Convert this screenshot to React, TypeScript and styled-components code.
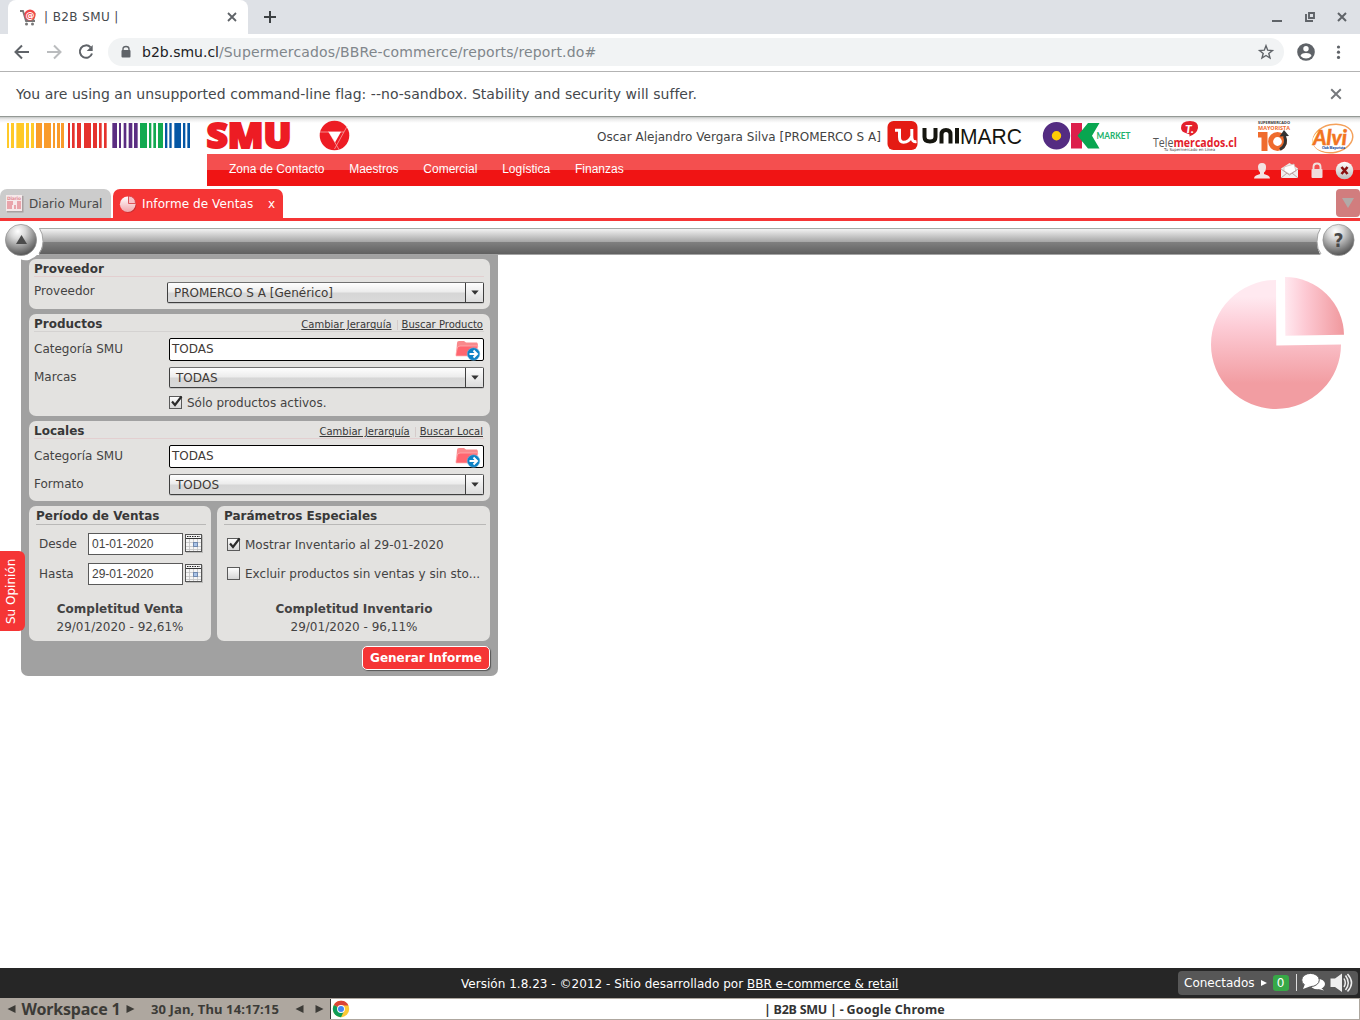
import React from "react";
import styled, { createGlobalStyle } from "styled-components";

const Global = createGlobalStyle`
  *{box-sizing:border-box}
  body{margin:0;background:#fff;overflow:hidden;font-family:"DejaVu Sans",sans-serif}
  svg{display:block;flex:none;overflow:visible}
`;

const Screen = styled.div`
  width: 1360px;
  height: 1020px;
  display: flex;
  flex-direction: column;
  font-size: 12px;
  color: #434343;
`;

const Label = styled.span<{ $size?: number; $ls?: number; $color?: string; $bold?: boolean; $family?: string; $u?: boolean }>`
  white-space: pre;
  font-size: ${(p) => p.$size ?? 12}px;
  letter-spacing: ${(p) => p.$ls ?? 0}px;
  color: ${(p) => p.$color ?? "inherit"};
  font-weight: ${(p) => (p.$bold ? 700 : 400)};
  font-family: ${(p) => p.$family ?? "inherit"};
  text-decoration: ${(p) => (p.$u ? "underline" : "none")};
`;

/* Browser chrome */
const TabStrip = styled.div`
  height: 34px;
  flex: none;
  background: #dee1e6;
  display: flex;
  padding-left: 8px;
`;
const BrowserTab = styled.div`
  width: 240px;
  background: #fff;
  border-radius: 8px 8px 0 0;
  display: flex;
  align-items: center;
  padding: 0 11px 0 12px;
`;
const TabTitle = styled(Label)`
  flex: 1;
  padding-left: 7px;
`;
const NewTab = styled.div`
  padding: 11px 0 0 16px;
  flex: 1;
`;
const WindowButtons = styled.div`
  display: flex;
  align-items: center;
  gap: 22.5px;
  padding-right: 13px;
`;
const AddressRow = styled.div`
  height: 38px;
  flex: none;
  display: flex;
  align-items: center;
  padding: 0 15px 1px 14px;
  border-bottom: 1px solid #b3b3b3;
`;
const NavIcons = styled.div`
  display: flex;
  gap: 16px;
  width: 94px;
`;
const Omnibox = styled.div`
  width: 1176px;
  height: 28px;
  border-radius: 14px;
  background: #f1f3f4;
  display: flex;
  align-items: center;
  padding: 0 10px 0 12px;
`;
const Url = styled.div`
  flex: 1;
  padding-left: 10px;
  white-space: pre;
`;
const ProfileIcons = styled.div`
  display: flex;
  flex: 1;
  align-items: center;
  justify-content: space-between;
  padding: 0 4px 0 13px;
`;
const InfoBar = styled.div`
  height: 44px;
  flex: none;
  display: flex;
  align-items: center;
  justify-content: space-between;
  padding: 0 18px 0 16px;
`;

/* Site header */
const SiteHeader = styled.header`
  height: 38px;
  flex: none;
  display: flex;
  border-top: 1px solid #949995;
  background: linear-gradient(#c4c6c5, #e9e9e9 2px, #fff 6px);
`;
const UserName = styled.div`
  width: 534px;
  padding: 13px 4px 0 0;
  text-align: right;
`;
const Menu = styled.nav`
  margin-left: 207px;
  height: 32px;
  flex: none;
  display: flex;
  background: linear-gradient(#f44f4f 50%, #f01414 50%);
  padding: 0 6px 0 22px;
`;
const MenuItems = styled.div`
  flex: 1;
  display: flex;
  gap: 24.8px;
  line-height: 30px;
  color: #fff;
  font-family: "Liberation Sans", Arial, sans-serif;
`;
const MenuIcons = styled.div`
  display: flex;
  align-items: center;
`;
const PageTabs = styled.div`
  height: 35px;
  flex: none;
  display: flex;
  gap: 2px;
  padding-top: 3px;
  border-bottom: 3px solid #f53535;
`;
const PageTab = styled.div<{ $active?: boolean }>`
  width: ${(p) => (p.$active ? 170 : 111)}px;
  border-radius: 7px 7px 0 0;
  background: ${(p) => (p.$active ? "#f53535" : "#cccccc")};
  color: ${(p) => (p.$active ? "#fff" : "#484848")};
  display: flex;
  align-items: center;
  justify-content: space-between;
  padding: 0 8px 0 6px;
`;
const TabCaption = styled.div<{ $pad: number }>`
  flex: 1;
  padding-left: ${(p) => p.$pad}px;
`;
const TabMenu = styled.div`
  width: 24px;
  height: 28px;
  margin-left: auto;
  border-radius: 4px;
  background: #d17d7e;
  display: flex;
  align-items: center;
  justify-content: center;
`;
const ToolStrip = styled.div`
  height: 34px;
  flex: none;
  padding-top: 7px;
  position: relative;
  z-index: 2;
`;
const ToolBar = styled.div`
  height: 27px;
  margin: 0 39px;
  border-top: 1px solid #a6aaa7;
  border-bottom: 1px solid #a4a4a4;
  background: linear-gradient(#f2f2f2, #a5a5a5 13px, #808080 13px, #606060);
`;
const Knob = styled.div<{ $right?: boolean }>`
  position: absolute;
  top: 0px;
  ${(p) => (p.$right ? "right: -1px;" : "left: -1px;")}
`;

/* Report form */
const Content = styled.main`
  flex: 1;
  display: flex;
  justify-content: space-between;
  align-items: flex-start;
  position: relative;
`;
const Panel = styled.section`
  margin-left: 21px;
  width: 477px;
  height: 421px;
  background: #a1a1a1;
  border-radius: 0 0 7px 7px;
  padding: 4px 8px 0;
  display: flex;
  flex-direction: column;
  gap: 5px;
`;
const Card = styled.div<{ $h: number }>`
  height: ${(p) => p.$h}px;
  border-radius: 7px;
  background: #e3e2e0;
  padding: 0 6px 0 5px;
  display: flex;
  flex-direction: column;
`;
const CardTitle = styled.div<{ $tint?: boolean }>`
  height: 18px;
  flex: none;
  padding-top: 2px;
  border-bottom: 1px solid ${(p) => (p.$tint ? "#e3cfd0" : "#d4d2d1")};
  display: flex;
  align-items: center;
  justify-content: space-between;
  color: #383838;
`;
const Links = styled.div`
  display: flex;
  align-items: center;
  padding: 2px 1px 0 0;
`;
const LinkDivider = styled.i`
  width: 1px;
  height: 10px;
  margin: 0 4px 0 5px;
  background: #d5cbca;
`;
const Field = styled.div<{ $mt: number; $label?: number; $drop?: number }>`
  margin-top: ${(p) => p.$mt}px;
  display: grid;
  grid-template-columns: ${(p) => p.$label ?? 135}px 1fr;
  flex: none;
  line-height: 18px;

  & > ${Label} {
    padding-top: ${(p) => p.$drop ?? 0}px;
  }
`;
const SelectBox = styled.div`
  height: 21px;
  border: 1px solid #3f3f3f;
  border-top-color: #707070;
  border-radius: 2px;
  background: linear-gradient(#fefefe, #ececec 48%, #d6d6d6 52%, #dadada);
  box-shadow: 0 1px 0 #c4c4c4;
  display: flex;
  padding-left: 6px;
  line-height: 20px;
  color: #3f3a36;
`;
const SelectArrow = styled.div`
  width: 18px;
  margin-left: auto;
  border-left: 1px solid #3f3f3f;
  background: linear-gradient(#fdfdfd, #dcdcdc);
  display: flex;
  align-items: center;
  justify-content: center;
`;
const Picker = styled.div`
  height: 23px;
  border: 1px solid #000;
  border-radius: 2px;
  background: #fff;
  display: flex;
  justify-content: space-between;
  line-height: 20px;
  padding: 0 2px 0 2px;
  color: #3f3a36;
`;
const CheckRow = styled.div<{ $mt?: number; $ml?: number }>`
  display: flex;
  height: 14px;
  flex: none;
  align-items: center;
  gap: 4px;
  margin-top: ${(p) => p.$mt ?? 0}px;
  margin-left: ${(p) => p.$ml ?? 0}px;

  & > ${Label} {
    padding-top: 2px;
  }
`;
const SplitRow = styled.div`
  display: grid;
  grid-template-columns: 182px 273px;
  gap: 6px;
`;
const HalfCard = styled(Card)<{ $right: number }>`
  padding: 0 ${(p) => p.$right}px 0 7px;
`;
const HalfTitle = styled.div`
  height: 19px;
  flex: none;
  border-bottom: 1px solid #b9b8b7;
  line-height: 20px;
  color: #383838;
`;
const DateRow = styled.div<{ $mt: number }>`
  margin-top: ${(p) => p.$mt}px;
  height: 22px;
  flex: none;
  display: flex;
  align-items: center;
  padding-left: 3px;
`;
const DateLabel = styled.div`
  width: 49px;
`;
const DateBox = styled.div`
  width: 95px;
  height: 22px;
  margin-right: 2px;
  border: 1px solid #5a5a5a;
  background: #fff;
  padding-left: 3px;
  line-height: 20px;
  font-family: "Liberation Sans", Arial, sans-serif;
`;
const Complete = styled.div<{ $mt: number }>`
  margin-top: ${(p) => p.$mt}px;
  padding-right: 2px;
  text-align: center;
  line-height: 18px;
  white-space: nowrap;
`;
const Generate = styled.button`
  align-self: flex-end;
  width: 128px;
  height: 24px;
  padding: 0 0 2px;
  border: 1px solid #fff;
  border-radius: 5px;
  background: #f53535;
  box-shadow: 1px 1px 1px #555;
  color: #fff;
  font-family: "DejaVu Sans", sans-serif;
`;
const ChartArt = styled.div`
  padding: 20px 14px 0 0;
`;
const Opinion = styled.div`
  position: absolute;
  left: 0;
  top: 296px;
  width: 25px;
  height: 80px;
  border-radius: 6px 0 0 6px;
  background: #f53535;
  color: #fff;
  writing-mode: vertical-rl;
  transform: rotate(180deg);
  display: flex;
  align-items: center;
  justify-content: center;
  padding-left: 4px;
`;

/* Footer and desktop task bar */
const Footer = styled.footer`
  height: 30px;
  flex: none;
  background: #262626;
  color: #fff;
  display: grid;
  grid-template-columns: 1fr 180px;
  align-items: center;
  padding-right: 2px;
`;
const Credits = styled.div`
  padding: 2px 0 0 461px;
`;
const Online = styled.div`
  height: 24px;
  border-radius: 4px;
  background: #575757;
  display: flex;
  align-items: center;
  padding-left: 6px;
`;
const Count = styled.div`
  width: 16px;
  height: 16px;
  margin: 0 6px 0 6px;
  border-radius: 3px;
  background: #37a847;
  text-align: center;
  line-height: 16px;
`;
const TaskBar = styled.div`
  height: 22px;
  flex: none;
  background: #aea79f;
  color: #3c3b37;
  display: flex;
  align-items: center;
  font-family: "Noto Sans", sans-serif;
  padding-left: 7px;
`;
const TaskText = styled.div<{ $w: number; $drop?: number }>`
  width: ${(p) => p.$w}px;
  padding-top: ${(p) => p.$drop ?? 0}px;
  text-align: center;
  line-height: 20px;
  white-space: nowrap;
`;
const TaskWindow = styled.div`
  width: 1029px;
  height: 20px;
  margin-left: 6px;
  border-left: 1px solid #3c3b37;
  background: #fff;
  color: #333;
  display: flex;
  align-items: center;
  padding-left: 1px;
`;
const TaskTitle = styled.div`
  flex: 1;
  text-align: center;
`;

const Cross = ({ s = 10, c = "#5f6368", w = 1.8 }: { s?: number; c?: string; w?: number }) => (
  <svg width={s} height={s} viewBox="0 0 10 10">
    <path d="M1 1L9 9M9 1L1 9" stroke={c} strokeWidth={w} />
  </svg>
);

const Favicon = () => (
  <svg width="17" height="17" viewBox="0 0 17 17">
    <path d="M0 2H3L6 12H15" fill="none" stroke="#777" strokeWidth="1.800" />
    <path d="M4 4H15.500L14 12H6Z" fill="#777" />
    <circle cx="10" cy="6" r="5.600" fill="#f04848" />
    <text x="10" y="9" fontSize="9" fontWeight="700" textAnchor="middle" fill="#fff" fontFamily="DejaVu Sans">@</text>
    <circle cx="6.500" cy="15" r="1.500" fill="#777" />
    <circle cx="12.500" cy="15" r="1.500" fill="#777" />
  </svg>
);

const yellow = "#ffc928", orange = "#f99b2b", red = "#e5322d", purple = "#5b2d82", green = "#12a950", blue = "#0557a5";
const bars: [number, number, string][] = [
  [21, 6, yellow], [33, 9, yellow], [49, 23, yellow], [78, 9, yellow], [93, 9, yellow],
  [108, 18, orange], [132, 21, orange], [159, 6, orange], [171, 9, orange], [183, 9, orange],
  [204, 6, red], [216, 8, red], [231, 12, red], [252, 21, red], [279, 12, red], [297, 8, red], [312, 8, red],
  [337, 14, purple], [357, 6, purple], [371, 8, purple], [386, 11, purple], [402, 11, purple],
  [420, 21, green], [447, 7, green], [460, 8, green], [474, 15, green],
  [495, 7, blue], [508, 7, blue], [523, 20, blue], [549, 7, blue], [562, 8, blue],
];

const LeftLogos = () => (
  <svg width="351" height="37" viewBox="0 117 351 37">
    {bars.map(([x, w, c]) => (
      <rect key={x} x={x / 3} y="123" width={w / 3} height="25" fill={c} />
    ))}
    <text x="206.500" y="148.300" fontFamily="Open Sans" fontWeight="800" fontSize="35" textLength="85" lengthAdjust="spacingAndGlyphs" fill="#ed1c24" stroke="#ed1c24" strokeWidth="2">SMU</text>
    <circle cx="334.500" cy="135.500" r="14.800" fill="#ed1c24" />
    <path d="M320 132H344M347 126.500L334.500 149M328.500 131.500L339 149.500" stroke="#f8a5a5" strokeWidth=".8" fill="none" />
    <path d="M328.500 131.800H341L335 142.500Z" fill="#fff" />
  </svg>
);

const BrandLogos = () => (
  <svg width="475" height="37" viewBox="885 117 475 37">
    <rect x="887.500" y="121" width="30" height="29" rx="6" fill="#e41b13" />
    <path d="M895 130.300H899.500V137Q899.500 142.300 903.500 142.300Q909 142.300 911.800 136V129M911.800 136Q911.500 142.500 916.500 141.500" fill="none" stroke="#fff" strokeWidth="3" />
    <g fill="none" stroke="#15150f" strokeWidth="4">
      <path d="M924.500 128V137Q924.500 141.500 930 141.500Q935.500 141.500 935.500 137V128" />
      <path d="M941.500 143.500V134.500Q941.500 130 946 130Q950.500 130 950.500 134.500V143.500M957 128V143.500" />
    </g>
    <text x="960" y="143.500" fontFamily="Liberation Sans" fontSize="22" textLength="62" lengthAdjust="spacingAndGlyphs" fill="#15150f">MARC</text>
    <circle cx="1056.500" cy="135.700" r="9.200" fill="#ffcb05" stroke="#542c82" strokeWidth="9" />
    <rect x="1071" y="123" width="11" height="25.500" fill="#dc1f4b" />
    <path d="M1077.500 135.700L1088 123H1099.500L1092 135.700L1099.500 148.500H1088Z" fill="#08a650" />
    <text x="1096.500" y="139" fontFamily="Lato" fontWeight="700" fontSize="8.500" textLength="34" lengthAdjust="spacingAndGlyphs" fill="#20b26b">MARKET</text>
    <path d="M1181 128Q1181 121 1190 121Q1198.500 121 1198 128Q1197 134 1189 136.500Q1191 134 1187 133.500Q1181 132 1181 128Z" fill="#e3202b" />
    <text x="1185" y="132.500" fontFamily="Lato" fontWeight="900" fontStyle="italic" fontSize="12" fill="#fff">T.</text>
    <text x="1153" y="146.500" fontFamily="Open Sans" fontSize="12.500" textLength="84" lengthAdjust="spacingAndGlyphs" fill="#555">
      Tele<tspan fontWeight="700" fill="#e3202b">mercados.cl</tspan>
    </text>
    <text x="1164" y="150.500" fontFamily="DejaVu Sans" fontSize="4" textLength="51" lengthAdjust="spacingAndGlyphs" fill="#444">Tu Supermercado en Línea</text>
    <text x="1258" y="124" fontFamily="Open Sans" fontWeight="700" fontSize="4.200" textLength="32" lengthAdjust="spacingAndGlyphs" fill="#383838">SUPERMERCADO</text>
    <text x="1258" y="129.500" fontFamily="Open Sans" fontWeight="700" fontSize="6" textLength="32" lengthAdjust="spacingAndGlyphs" fill="#ef6b2d">MAYORISTA</text>
    <path d="M1258 132H1267.500V151H1261.500V137.500H1258Z" fill="#ef6b2d" />
    <circle cx="1277.500" cy="141.500" r="6.900" fill="none" stroke="#ef6b2d" strokeWidth="5" />
    <path d="M1280 149.500Q1288 145 1284.500 136" fill="none" stroke="#333" strokeWidth="3" />
    <path d="M1279.500 136.500L1284 130L1289 136Z" fill="#333" />
    <ellipse cx="1333" cy="138.500" rx="20" ry="14" fill="none" stroke="#f4a15b" strokeWidth="1.500" transform="rotate(-12 1333 138.500)" />
    <ellipse cx="1331" cy="138.500" rx="18.500" ry="12.500" fill="#fff" transform="rotate(-12 1333 138.500)" />
    <text x="1313" y="144.500" fontFamily="Lato" fontWeight="900" fontStyle="italic" fontSize="20.500" textLength="34" lengthAdjust="spacingAndGlyphs" fill="#f27521" stroke="#f27521" strokeWidth=".4">Alvi</text>
    <text x="1322" y="149" fontFamily="Open Sans" fontWeight="800" fontSize="3.800" textLength="23" lengthAdjust="spacingAndGlyphs" fill="#2350a0">Club Mayorista</text>
  </svg>
);

const MenuIconSet = () => (
  <svg width="100" height="32" viewBox="1254 154 100 32">
    <defs>
      <linearGradient id="ball" x2="0" y2="1"><stop stopColor="#fff" /><stop offset="1" stopColor="#bcbcbc" /></linearGradient>
    </defs>
    <path d="M1258 167Q1258 163 1262 163Q1266.500 163 1266 168Q1266 171 1264 172.500V174L1268 175.500Q1270 176.500 1270 178.500H1254Q1254 176.500 1256 175.500L1260 174V172.500Q1258 171 1258 167Z" fill="#f3e3e3" />
    <path d="M1281 168.500L1289.500 163L1298 168.500V178H1281Z" fill="#eee" />
    <path d="M1284 167L1294 164L1296 171L1289.500 174L1284 171Z" fill="#fff" stroke="#c9b6b1" strokeWidth=".7" />
    <path d="M1281 169L1289.500 175L1298 169M1281 178L1287 173M1298 178L1292 173" fill="none" stroke="#b99" strokeWidth=".9" />
    <path d="M1313.500 170V167Q1313.500 163.500 1317 163.500Q1320.500 163.500 1320.500 167V170" fill="none" stroke="#eee3df" strokeWidth="1.900" />
    <rect x="1311.500" y="169" width="11" height="9" rx="1" fill="#f0dddd" />
    <circle cx="1344.500" cy="170.500" r="8.800" fill="url(#ball)" />
    <path d="M1341.500 167L1347.500 174M1347.500 167L1341.500 174" stroke="#8b1010" strokeWidth="2.600" />
  </svg>
);

const NewsIcon = () => (
  <svg width="18" height="18" viewBox="0 0 18 18">
    <rect x="1" y="1" width="16.500" height="16.500" fill="#9a8e8e" opacity=".7" />
    <rect width="16" height="16" fill="#f6e9ea" />
    <text x="1" y="4.500" fontSize="4.500" fontWeight="700" textLength="14" fill="#e28e96" fontFamily="DejaVu Sans">Diario</text>
    <path d="M1 6H7V10H6V14H1ZM8 10H10V14H8ZM11 6H15V14H11Z" fill="#e9a4ab" />
  </svg>
);

const MiniPie = () => (
  <svg width="19" height="18" viewBox="0 0 19 18">
    <defs><linearGradient id="mini" x2="0" y2="1"><stop stopColor="#fff" /><stop offset="1" stopColor="#f0a5ab" /></linearGradient></defs>
    <circle cx="9.500" cy="10" r="7.800" fill="#a92b2f" opacity=".6" />
    <circle cx="8.700" cy="9.200" r="7.800" fill="url(#mini)" />
    <path d="M9.500 1Q16.500 1.500 16.500 8.500H9.500Z" fill="#f8c0c7" stroke="#d9474d" strokeWidth=".9" />
  </svg>
);

const KnobArt = ({ right }: { right?: boolean }) => (
  <svg width="46" height="42" viewBox="-1 221 46 42">
    <defs>
      <radialGradient id="knob" cx=".4" cy=".22" r=".82">
        <stop stopColor="#fff" /><stop offset=".3" stopColor="#d8d8d8" /><stop offset=".75" stopColor="#7b7b7b" /><stop offset="1" stopColor="#4b4b4b" />
      </radialGradient>
    </defs>
    <g transform={right ? "matrix(-1 0 0 1 44 0)" : undefined}>
      <path d={right ? "M-1 221H39V228Q43 233 43 241.500Q43 250 39 255.500H-1Z" : "M-1 221H39V228Q43 233 43 241.500Q42 255 29 260Q24 261 20 259L8 254H-1Z"} fill="#fff" />
      <path d="M39.500 228.500Q43 233 43 241.500Q43 249 39 254" fill="none" stroke="#a5a5a5" strokeWidth="1" />
    </g>
    <circle cx={right ? 22.500 : 21} cy="240" r="15.600" fill="url(#knob)" stroke="#909090" strokeWidth=".7" />
    {right ? (
      <text x="22.500" y="246.500" textAnchor="middle" fontFamily="DejaVu Sans" fontWeight="700" fontSize="19" textLength="10" lengthAdjust="spacingAndGlyphs" fill="#484848">?</text>
    ) : (
      <path d="M16 244L21.500 235L27 244Z" fill="#4b4b4b" />
    )}
  </svg>
);

const Select = ({ children }: { children: React.ReactNode }) => (
  <SelectBox>
    {children}
    <SelectArrow><svg width="8" height="5" viewBox="0 0 8 5"><path d="M.3 .5H7.700L4 4.800Z" fill="#333" /></svg></SelectArrow>
  </SelectBox>
);

const Folder = () => (
  <svg width="26" height="21" viewBox="0 0 26 21">
    <path d="M2 4Q2 2 4 2H9L11 3.500H22Q23 4 23 7L21 16H1Z" fill="#f9898c" />
    <path d="M5 7H23L18.500 17H1.500Q.5 17 1 15L2.500 8Z" fill="#ff6670" stroke="#ffb7b7" strokeWidth=".7" />
    <circle cx="18.500" cy="15" r="6.300" fill="#0d82c6" stroke="#85bfe0" strokeWidth=".5" />
    <path d="M14.500 15H21M18.500 11.500L22 15L18.500 18.500" fill="none" stroke="#fff" strokeWidth="2" />
  </svg>
);

const Check = ({ on }: { on?: boolean }) => (
  <svg width="14" height="14" viewBox="0 0 14 14">
    <defs><linearGradient id="cb" x2="0" y2="1"><stop stopColor="#fff" /><stop offset="1" stopColor="#d4d4d4" /></linearGradient></defs>
    <rect x=".5" y="1.500" width="12" height="12" fill="url(#cb)" stroke="#5a5a5a" />
    {on && <path d="M3 6.500L6 10L12.500 1.500" fill="none" stroke="#2b2b2b" strokeWidth="2.200" />}
  </svg>
);

const Calendar = () => (
  <svg width="18" height="20" viewBox="0 0 18 20">
    <rect x="1" y="1" width="17" height="18" fill="#bcbcba" />
    <rect x=".5" y=".5" width="16" height="17" fill="#f6f6f6" stroke="#555" />
    <path d="M2 2.500H15" stroke="#222" strokeDasharray="1.500 1" />
    <path d="M1 4.500H16" stroke="#333" />
    <path d="M4.500 5V17M8.500 5V17M12.500 5V17M1 8.500H16M1 12.500H16M1 15.500H16" stroke="#c2c2c2" strokeWidth=".8" />
    <rect x="8.500" y="8.500" width="4" height="4" fill="#a9c3e6" stroke="#7089ae" />
  </svg>
);

const BigPie = () => (
  <svg width="136" height="134" viewBox="1210 275 136 134">
    <defs>
      <linearGradient id="pv" x2="0" y2="1"><stop offset=".13" stopColor="#ffe9f0" /><stop offset=".36" stopColor="#fdccd6" /><stop offset=".8" stopColor="#f29da2" /></linearGradient>
      <linearGradient id="ph"><stop stopColor="#ffe9f0" /><stop offset=".35" stopColor="#fdc9d3" /><stop offset="1" stopColor="#f0989d" /></linearGradient>
    </defs>
    <path d="M1276 280A65 64.500 0 1 0 1341 344.500L1276.300 345.500Z" fill="url(#pv)" />
    <path d="M1285 277A59 58.500 0 0 1 1344 334.800L1285.300 335.800Z" fill="url(#ph)" />
  </svg>
);

const Tri = ({ left }: { left?: boolean }) => (
  <svg width="9" height="8" viewBox="0 0 9 8"><path d={left ? "M8.500 0V8L.5 4Z" : "M.5 0V8L8.500 4Z"} fill="#3c3b37" /></svg>
);

export default function App() {
  return (
    <Screen>
      <Global />
      <TabStrip>
        <BrowserTab>
          <Favicon />
          <TabTitle $color="#45494d" $ls={0.4}>| B2B SMU |</TabTitle>
          <Cross />
        </BrowserTab>
        <NewTab><svg width="12" height="12" viewBox="0 0 12 12"><path d="M6 0V12M0 6H12" stroke="#3c4043" strokeWidth="2" /></svg></NewTab>
        <WindowButtons>
          <svg width="10" height="10"><path d="M0 9H10" stroke="#5f6368" strokeWidth="2" /></svg>
          <svg width="10" height="10"><path d="M4 1H9V6H4ZM1 2V9H8" fill="none" stroke="#5f6368" strokeWidth="1.900" /></svg>
          <Cross w={2} />
        </WindowButtons>
      </TabStrip>
      <AddressRow>
        <NavIcons>
          <svg width="16" height="16" viewBox="0 0 16 16"><path d="M15 8H2M8 1.500L1.500 8L8 14.500" fill="none" stroke="#5f6368" strokeWidth="2" /></svg>
          <svg width="16" height="16" viewBox="0 0 16 16"><path d="M1 8H14M8 1.500L14.500 8L8 14.500" fill="none" stroke="#babcbe" strokeWidth="2" /></svg>
          <svg width="16" height="16" viewBox="0 0 16 16"><path d="M12.500 3.200A6.200 6.200 0 1 0 14 9.500" fill="none" stroke="#5f6368" strokeWidth="2" /><path d="M14.700 1V7H8.700Z" fill="#5f6368" /></svg>
        </NavIcons>
        <Omnibox>
          <svg width="12" height="14" viewBox="0 0 12 14"><path d="M3 6V4Q3 1.500 6 1.500Q9 1.500 9 4V6" fill="none" stroke="#5f6368" strokeWidth="1.400" /><rect x="1.500" y="5" width="9" height="7.500" rx="1" fill="#5f6368" /></svg>
          <Url><Label $size={14} $color="#202124">b2b.smu.cl</Label><Label $size={14} $color="#80868b" $ls={0.14}>/Supermercados/BBRe-commerce/reports/report.do#</Label></Url>
          <svg width="16" height="16" viewBox="0 0 16 16"><path d="M8 1.800L9.700 6.200L14.400 6.500L10.800 9.500L12 14L8 11.500L4 14L5.200 9.500L1.600 6.500L6.300 6.200Z" fill="none" stroke="#5f6368" strokeWidth="1.400" /></svg>
        </Omnibox>
        <ProfileIcons>
          <svg width="18" height="18" viewBox="0 0 18 18"><circle cx="9" cy="9" r="8.800" fill="#5f6368" /><circle cx="9" cy="5.800" r="2.700" fill="#fff" /><path d="M3.500 13Q4 10 9 10Q14 10 14.500 13Q12 15.500 9 15.500Q6 15.500 3.500 13Z" fill="#fff" /></svg>
          <svg width="4" height="14" viewBox="0 0 4 14"><g fill="#5f6368"><circle cx="1.500" cy="2" r="1.600" /><circle cx="1.500" cy="7.200" r="1.600" /><circle cx="1.500" cy="12.400" r="1.600" /></g></svg>
        </ProfileIcons>
      </AddressRow>
      <InfoBar>
        <Label $size={14} $ls={0.03} $color="#45484c">You are using an unsupported command-line flag: --no-sandbox. Stability and security will suffer.</Label>
        <Cross s={12} c="#75787c" w={1.6} />
      </InfoBar>

      <SiteHeader>
        <LeftLogos />
        <UserName><Label $ls={0.015}>Oscar Alejandro Vergara Silva [PROMERCO S A]</Label></UserName>
        <BrandLogos />
      </SiteHeader>
      <Menu>
        <MenuItems>
          {["Zona de Contacto", "Maestros", "Comercial", "Logística", "Finanzas"].map((t) => <Label key={t}>{t}</Label>)}
        </MenuItems>
        <MenuIcons><MenuIconSet /></MenuIcons>
      </Menu>
      <PageTabs>
        <PageTab><NewsIcon /><TabCaption $pad={5}><Label $ls={0.04}>Diario Mural</Label></TabCaption></PageTab>
        <PageTab $active><MiniPie /><TabCaption $pad={4}><Label $ls={0.09}>Informe de Ventas</Label></TabCaption><Label>x</Label></PageTab>
        <TabMenu><svg width="12" height="10"><path d="M0 0H12L6 10Z" fill="#b1aaa8" /></svg></TabMenu>
      </PageTabs>
      <ToolStrip>
        <ToolBar />
        <Knob><KnobArt /></Knob>
        <Knob $right><KnobArt right /></Knob>
      </ToolStrip>

      <Content>
        <Panel>
          <Card $h={50}>
            <CardTitle $tint><Label $bold>Proveedor</Label></CardTitle>
            <Field $mt={5} $label={133}><Label>Proveedor</Label><Select><Label>PROMERCO S A [Genérico]</Label></Select></Field>
          </Card>
          <Card $h={102}>
            <CardTitle><Label $bold>Productos</Label><Links><Label $size={10} $u>Cambiar Jerarquía</Label><LinkDivider /><Label $size={10} $u>Buscar Producto</Label></Links></CardTitle>
            <Field $mt={6} $drop={2}><Label>Categoría SMU</Label><Picker><Label>TODAS</Label><Folder /></Picker></Field>
            <Field $mt={6} $drop={1}><Label>Marcas</Label><Select><Label>TODAS</Label></Select></Field>
            <CheckRow $mt={7} $ml={135}><Check on /><Label>Sólo productos activos.</Label></CheckRow>
          </Card>
          <Card $h={80}>
            <CardTitle $tint><Label $bold>Locales</Label><Links><Label $size={10} $u>Cambiar Jerarquía</Label><LinkDivider /><Label $size={10} $u>Buscar Local</Label></Links></CardTitle>
            <Field $mt={6} $drop={2}><Label>Categoría SMU</Label><Picker><Label>TODAS</Label><Folder /></Picker></Field>
            <Field $mt={6} $drop={1}><Label>Formato</Label><Select><Label>TODOS</Label></Select></Field>
          </Card>
          <SplitRow>
            <HalfCard $h={135} $right={5}>
              <HalfTitle><Label $bold>Período de Ventas</Label></HalfTitle>
              <DateRow $mt={8}><DateLabel><Label>Desde</Label></DateLabel><DateBox><Label>01-01-2020</Label></DateBox><Calendar /></DateRow>
              <DateRow $mt={8}><DateLabel><Label>Hasta</Label></DateLabel><DateBox><Label>29-01-2020</Label></DateBox><Calendar /></DateRow>
              <Complete $mt={15}><Label $bold>Completitud Venta</Label><br /><Label>29/01/2020 - 92,61%</Label></Complete>
            </HalfCard>
            <HalfCard $h={135} $right={4}>
              <HalfTitle><Label $bold>Parámetros Especiales</Label></HalfTitle>
              <CheckRow $mt={12} $ml={3}><Check on /><Label>Mostrar Inventario al 29-01-2020</Label></CheckRow>
              <CheckRow $mt={15} $ml={3}><Check /><Label $ls={0.02}>Excluir productos sin ventas y sin sto...</Label></CheckRow>
              <Complete $mt={20}><Label $bold>Completitud Inventario</Label><br /><Label>29/01/2020 - 96,11%</Label></Complete>
            </HalfCard>
          </SplitRow>
          <Generate><Label $bold>Generar Informe</Label></Generate>
        </Panel>
        <ChartArt><BigPie /></ChartArt>
        <Opinion><Label>Su Opinión</Label></Opinion>
      </Content>

      <Footer>
        <Credits><Label $ls={0.03}>Versión 1.8.23 - ©2012 - Sitio desarrollado por </Label><Label $u>BBR e-commerce &amp; retail</Label></Credits>
        <Online>
          <Label>Conectados</Label>
          <svg width="12" height="6" viewBox="0 0 12 6"><path d="M6 0V6L12 3Z" fill="#fff" /></svg>
          <Count>0</Count>
          <svg width="60" height="22" viewBox="1295 972 60 22">
            <path d="M1296.500 974V991" stroke="#ddd" />
            <ellipse cx="1317.500" cy="984" rx="7.500" ry="5.200" fill="#fff" />
            <path d="M1320 987L1324 990.500L1315 988Z" fill="#fff" />
            <ellipse cx="1310.500" cy="980" rx="8.800" ry="6.600" fill="#fff" stroke="#575757" />
            <path d="M1305 984L1303 989L1311 986Z" fill="#fff" />
            <path d="M1330.500 978.500H1335L1342 973.500V992L1335 987H1330.500Z" fill="#eee" />
            <path d="M1344 978.500Q1346.500 983 1344 987M1345.500 975.500Q1351 983 1345.500 990M1347.500 974Q1355.500 983 1347.500 991.500" fill="none" stroke="#eee" strokeWidth="1.500" />
          </svg>
        </Online>
      </Footer>
      <TaskBar>
        <Tri left />
        <TaskText $w={110} $drop={1}><Label $size={16} $bold $ls={-0.2}>Workspace 1</Label></TaskText>
        <Tri />
        <TaskText $w={160}><Label $size={13} $bold $ls={0.12}>30 Jan, Thu 14:17:15</Label></TaskText>
        <Tri left /><TaskText $w={11} /><Tri />
        <TaskWindow>
          <svg width="18" height="18" viewBox="0 0 18 18">
            <circle cx="9" cy="9" r="8.200" fill="#fcc934" />
            <path d="M9 9L1.900 4.900A8.200 8.200 0 0 1 16.500 5.500H9Z" fill="#db4437" />
            <path d="M9 9L1.900 4.900A8.200 8.200 0 0 0 9 17.200L12 11Z" fill="#0f9d58" />
            <circle cx="9" cy="9" r="3.900" fill="#fff" /><circle cx="9" cy="9" r="3" fill="#4285f4" />
          </svg>
          <TaskTitle><Label $size={12.5} $bold $ls={-0.25}>| B2B SMU | - </Label><Label $size={12.5} $bold $ls={0.2}>Google Chrome</Label></TaskTitle>
        </TaskWindow>
      </TaskBar>
    </Screen>
  );
}
